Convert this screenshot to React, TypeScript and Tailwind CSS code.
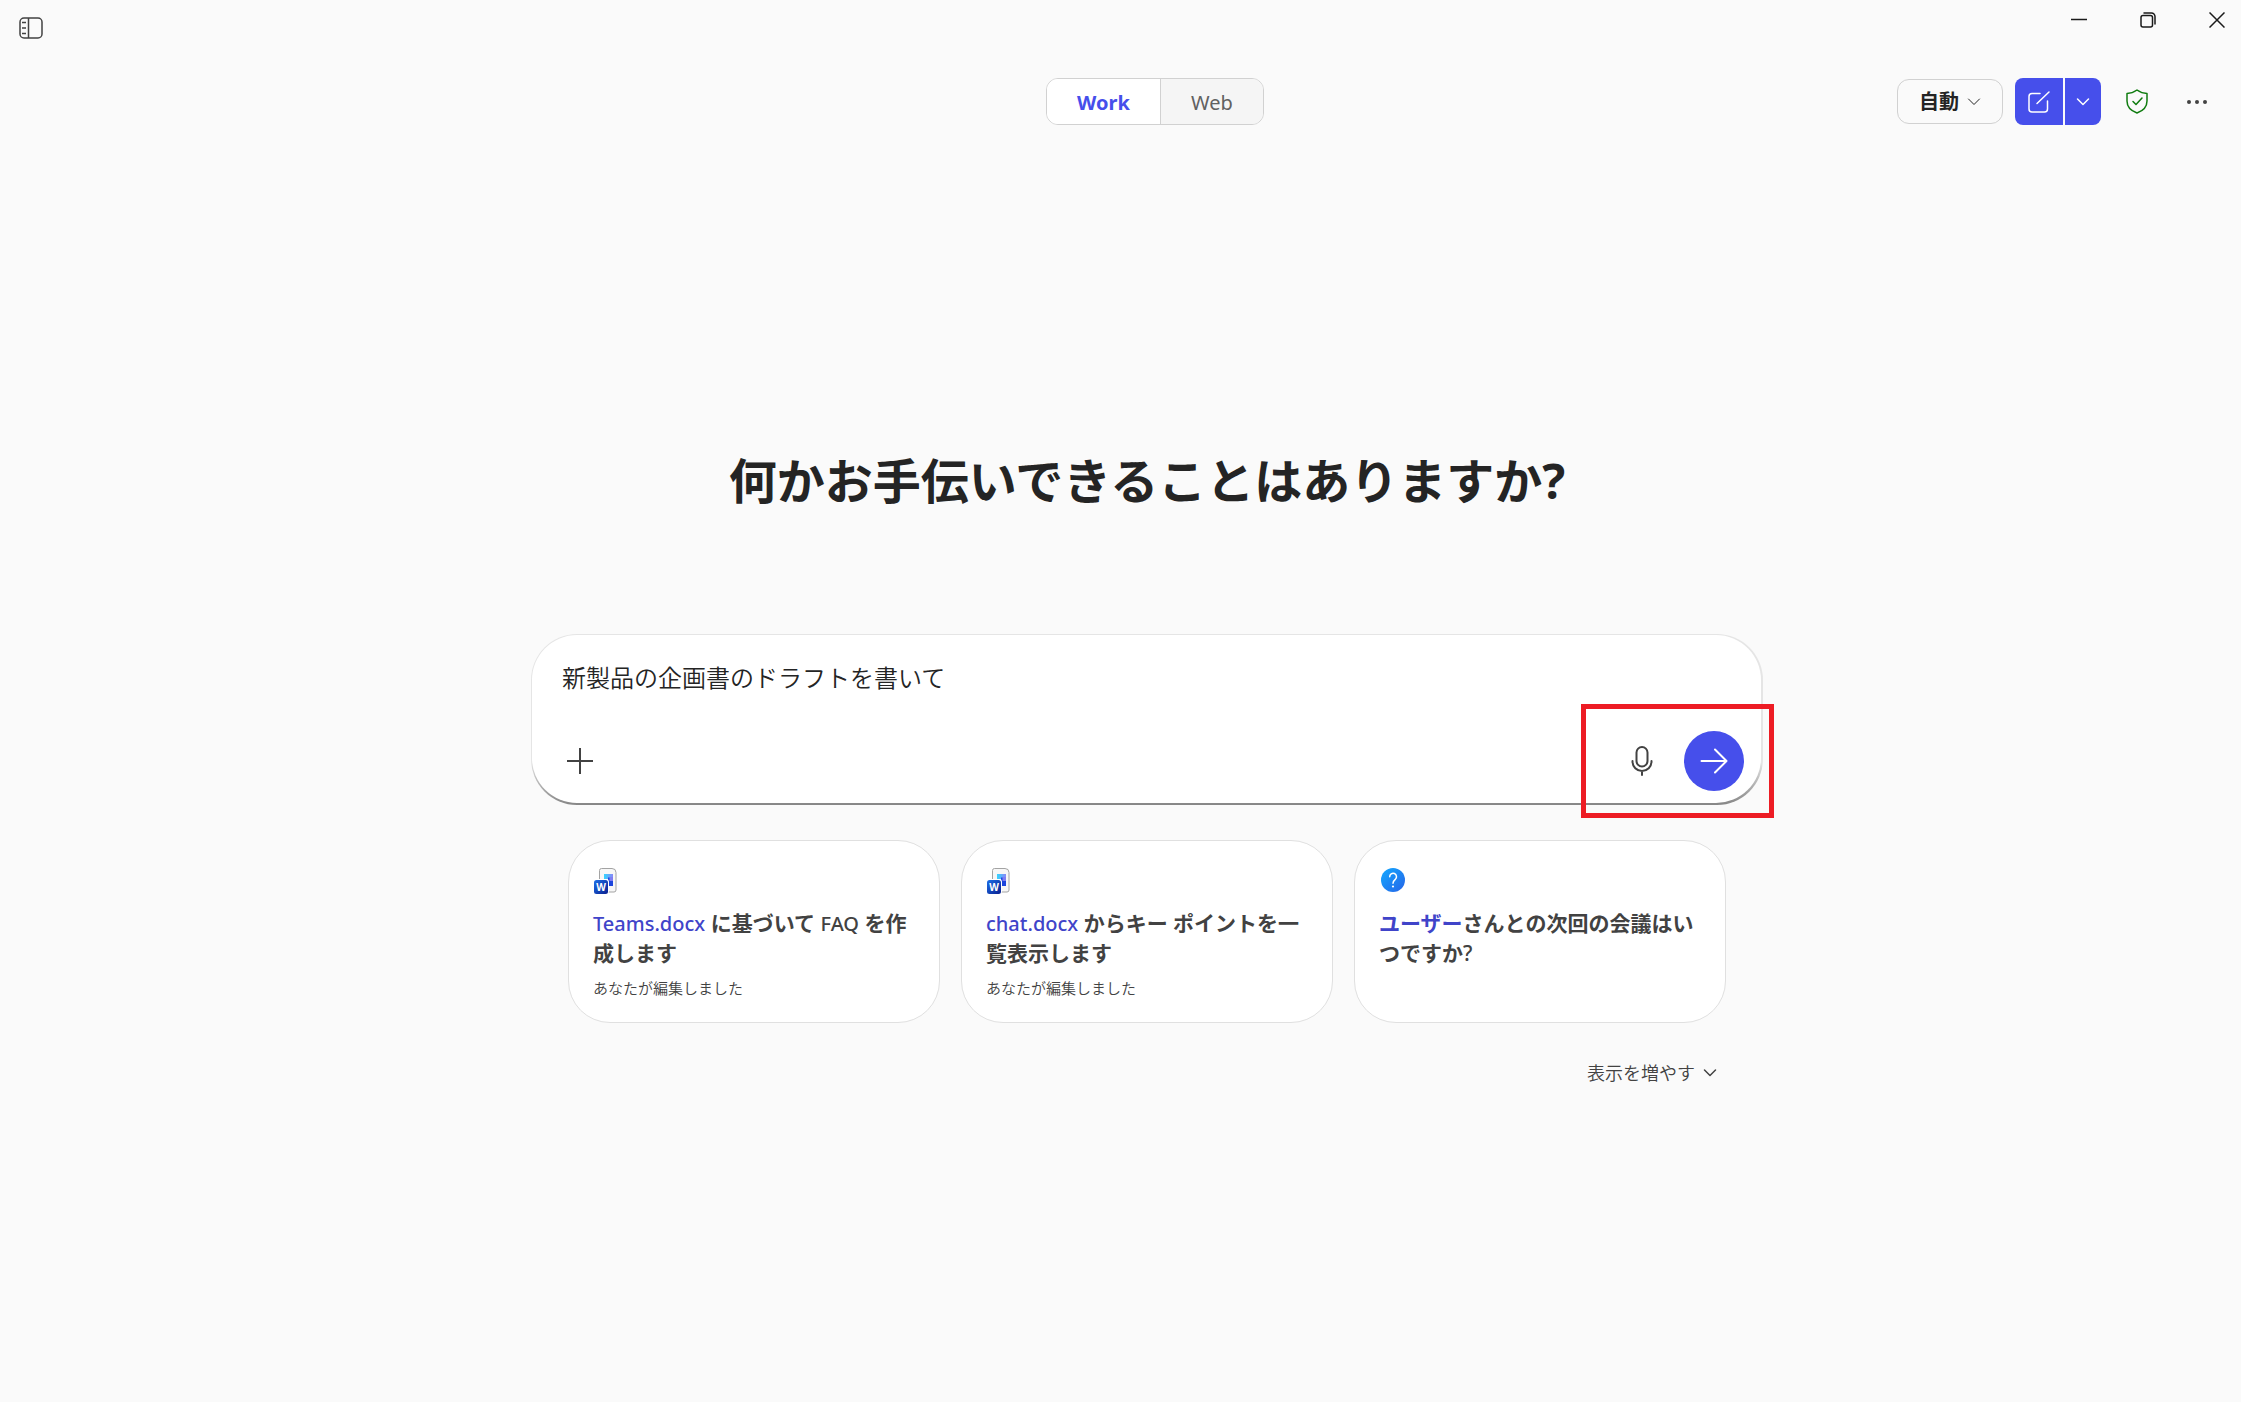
import { useState } from 'react'
import type { ReactNode } from 'react'

type Suggestion = {
  id: number
  icon: 'word' | 'question'
  title: ReactNode
  note?: string
}

const suggestions: Suggestion[] = [
  {
    id: 1,
    icon: 'word',
    title: (
      <>
        <span className="text-xl font-medium text-[#4044c9]">Teams.docx</span> に基づいて{' '}
        <span className="text-xl font-medium">FAQ</span> を作成します
      </>
    ),
    note: 'あなたが編集しました',
  },
  {
    id: 2,
    icon: 'word',
    title: (
      <>
        <span className="text-xl font-medium text-[#4044c9]">chat.docx</span> からキー ポイントを一覧表示します
      </>
    ),
    note: 'あなたが編集しました',
  },
  {
    id: 3,
    icon: 'question',
    title: (
      <>
        <span className="text-[#4044c9]">ユーザー</span>さんとの次回の会議はいつですか<span className="font-medium">?</span>
      </>
    ),
  },
]

function SidebarIcon() {
  return (
    <svg width="24" height="22" viewBox="0 0 24 22" fill="none" stroke="#424242" strokeWidth="1.5">
      <rect x="1" y="1" width="22" height="20" rx="4" />
      <path d="M9.500 1v20M3 5.500h4M3 11h4M3 16.500h4" />
    </svg>
  )
}

function ChevronDown({ className }: { className?: string }) {
  return (
    <svg
      className={className}
      width="14"
      height="10"
      viewBox="0 0 14 10"
      fill="none"
      stroke="currentColor"
      strokeLinecap="round"
      strokeLinejoin="round"
    >
      <path d="M1.500 2 7 7.500 12.500 2" />
    </svg>
  )
}

function ComposeIcon() {
  return (
    <svg width="24" height="24" viewBox="0 0 24 24" fill="none" stroke="white" strokeWidth="1.5" strokeLinecap="round">
      <path d="M13 3.500H5A3 3 0 0 0 2 6.500v12.500A3 3 0 0 0 5 22h12.500a3 3 0 0 0 3-3V11" />
      <path d="M10 13.500 22 2" />
    </svg>
  )
}

function ShieldIcon() {
  return (
    <svg
      width="24"
      height="26"
      viewBox="0 0 24 26"
      fill="none"
      stroke="#107c10"
      strokeWidth="1.5"
      strokeLinecap="round"
      strokeLinejoin="round"
    >
      <path d="M12 1c3 2.200 6.200 3.400 10 3.500V12c0 5.800-3.600 9.700-10 12-6.400-2.300-10-6.200-10-12V4.500c3.800-.1 7-1.300 10-3.500z" />
      <path d="m8 12.500 3 3 6-6.500" />
    </svg>
  )
}

function MicIcon() {
  return (
    <svg width="24" height="32" viewBox="0 0 24 32" fill="none" stroke="#424242" strokeWidth="2" strokeLinecap="round">
      <rect x="6.500" y="2" width="11" height="19.500" rx="5.500" />
      <path d="M2.500 16v.5a9.500 9.500 0 0 0 19 0V16M12 26v4" />
    </svg>
  )
}

function WordIcon() {
  return (
    <svg className="ml-px" width="24" height="26" viewBox="0 0 24 26">
      <defs>
        <linearGradient id="word-tile" x1="0" y1="0" x2="1" y2="1">
          <stop offset="0" stopColor="#1d6fe8" />
          <stop offset="1" stopColor="#0a1f8f" />
        </linearGradient>
        <linearGradient id="word-page" x1="0" y1="0" x2="1" y2="0">
          <stop offset="0" stopColor="#33d6ff" />
          <stop offset="1" stopColor="#8a86f7" />
        </linearGradient>
      </defs>
      <path
        d="M7.500.5h10.500a4 4 0 0 1 4 4V22a2 2 0 0 1-2 2H7.500a2 2 0 0 1-2-2V2.500a2 2 0 0 1 2-2z"
        fill="#f7f7f7"
        stroke="#a3a3a3"
      />
      <path d="M10 6h9v5h-9z" fill="url(#word-page)" />
      <path d="M14 9.500h5V18h-5z" fill="#1c45dd" />
      <path d="M15.500 9h3.500v4h-3.500z" fill="#7f7df2" />
      <rect x="0" y="11" width="15" height="15" rx="3" fill="white" />
      <rect x="0" y="12" width="14" height="14" rx="2.500" fill="url(#word-tile)" />
      <text
        x="7"
        y="22.500"
        textAnchor="middle"
        className="fill-white font-['Noto_Sans',sans-serif] text-[10px] font-bold"
      >
        W
      </text>
    </svg>
  )
}

function QuestionIcon() {
  return (
    <svg className="ml-0.5" width="24" height="24" viewBox="0 0 24 24">
      <defs>
        <linearGradient id="question-fill" x1="0" y1="0" x2="1" y2="1">
          <stop offset="0" stopColor="#12a9ff" />
          <stop offset="1" stopColor="#2764e7" />
        </linearGradient>
      </defs>
      <circle cx="12" cy="12" r="12" fill="url(#question-fill)" />
      <path
        d="M8.700 8.800a3.400 3.400 0 1 1 5.700 2.400c-1.500 1.300-2.400 2-2.400 4"
        fill="none"
        stroke="white"
        strokeWidth="1.500"
        strokeLinecap="round"
      />
      <circle cx="12" cy="18.500" r="1.100" fill="white" />
    </svg>
  )
}

function IconButton({ label, children, className = '' }: { label: string; children: ReactNode; className?: string }) {
  return (
    <button type="button" aria-label={label} className={`flex items-center justify-center ${className}`}>
      {children}
    </button>
  )
}

function SuggestionCard({ item }: { item: Suggestion }) {
  return (
    <button
      type="button"
      className="flex flex-col items-start rounded-[42px] border border-[#e0e0e0] bg-white px-6 pt-[27px] pb-[22px] text-left text-[#424242]"
    >
      <span className="flex h-[26px] items-start">
        {item.icon === 'word' ? <WordIcon /> : <QuestionIcon />}
      </span>
      <span className="mt-3.5 text-[21px] leading-[30px] font-bold">{item.title}</span>
      {item.note && <span className="mt-2 text-[15px] leading-6 font-[350]">{item.note}</span>}
    </button>
  )
}

export default function App() {
  const [mode, setMode] = useState<'work' | 'web'>('work')
  const [prompt, setPrompt] = useState('新製品の企画書のドラフトを書いて')

  const tabClass = (active: boolean) =>
    active ? 'bg-white font-bold text-[#464feb]' : 'bg-[#f5f5f5] text-[#616161]'

  return (
    <div className="min-h-screen bg-[#fafafa] font-['Noto_Sans','Noto_Sans_CJK_JP',sans-serif] text-[#242424]">
      <div className="flex h-14 items-start justify-between">
        <IconButton label="サイドバー" className="h-14 pl-[19px]">
          <SidebarIcon />
        </IconButton>
        <div className="flex h-10 text-[#1b1b1b]">
          <IconButton label="最小化" className="w-[69px]">
            <svg width="16" height="16" viewBox="0 0 16 16" stroke="currentColor" strokeWidth="1.500">
              <path d="M0 7.500h16" />
            </svg>
          </IconButton>
          <IconButton label="元に戻す" className="w-[69px]">
            <svg width="16" height="16" viewBox="0 0 16 16" fill="none" stroke="currentColor" strokeWidth="1.500">
              <rect x="1" y="3.500" width="11.500" height="11.500" rx="2" />
              <path d="M4 1h7.500A3.500 3.500 0 0 1 15 4.500V12" strokeLinecap="round" />
            </svg>
          </IconButton>
          <IconButton label="閉じる" className="w-[59px] pl-[11px]">
            <svg width="16" height="16" viewBox="0 0 16 16" stroke="currentColor" strokeWidth="1.500">
              <path d="m.5.5 15 15M15.500.5l-15 15" />
            </svg>
          </IconButton>
        </div>
      </div>

      <header className="grid grid-cols-[1fr_auto_1fr] items-center pt-[22px] pr-8 pl-[101px]">
        <div />
        <div className="flex h-[47px] overflow-hidden rounded-xl border border-[#d1d1d1] text-xl">
          <button
            type="button"
            aria-pressed={mode === 'work'}
            onClick={() => setMode('work')}
            className={`w-[114px] border-r border-[#d1d1d1] pt-0.5 ${tabClass(mode === 'work')}`}
          >
            Work
          </button>
          <button
            type="button"
            aria-pressed={mode === 'web'}
            onClick={() => setMode('web')}
            className={`w-[102px] pt-0.5 ${tabClass(mode === 'web')}`}
          >
            Web
          </button>
        </div>
        <div className="flex items-center justify-end">
          <button
            type="button"
            className="flex h-[45px] w-[106px] items-center justify-center gap-2 rounded-xl border border-[#d1d1d1] text-xl font-bold"
          >
            自動
            <ChevronDown />
          </button>
          <div className="ml-3 flex h-[47px] gap-0.5">
            <IconButton label="新しいチャット" className="w-12 rounded-l-lg bg-[#464feb]">
              <ComposeIcon />
            </IconButton>
            <IconButton label="その他の作成オプション" className="w-9 rounded-r-lg bg-[#464feb] text-white">
              <ChevronDown className="stroke-[1.5]" />
            </IconButton>
          </div>
          <IconButton label="保護" className="ml-6 h-11 w-6">
            <ShieldIcon />
          </IconButton>
          <IconButton label="その他" className="ml-9 h-11 w-6">
            <svg width="20" height="4" viewBox="0 0 20 4" fill="#424242">
              <circle cx="2" cy="2" r="2" />
              <circle cx="10" cy="2" r="2" />
              <circle cx="18" cy="2" r="2" />
            </svg>
          </IconButton>
        </div>
      </header>

      <main className="pt-[324px] pl-[53px]">
        <div className="mx-auto max-w-[1232px]">
          <h1 className="text-center text-5xl leading-[64px] font-bold">何かお手伝いできることはありますか?</h1>

          <form
            onSubmit={(e) => e.preventDefault()}
            className="relative mt-[121px] rounded-[46px] bg-linear-to-b from-[#e5e5e5] from-75% to-[#868686] pt-px pr-0.5 pb-0.5 pl-px"
          >
            <div className="rounded-[45px] bg-white pt-[23px] pr-[17px] pb-3 pl-[30px]">
              <input
                type="text"
                aria-label="メッセージ"
                value={prompt}
                onChange={(e) => setPrompt(e.target.value)}
                className="block h-9 w-full text-2xl font-[350] outline-none"
              />
              <div className="mt-[37px] flex items-center justify-between">
                <IconButton label="追加" className="size-9">
                  <svg width="28" height="28" viewBox="0 0 28 28" stroke="#424242" strokeWidth="2">
                    <path d="M14 1v26M1 14h26" />
                  </svg>
                </IconButton>
                <div className="flex items-center gap-[30px]">
                  <IconButton label="音声入力">
                    <MicIcon />
                  </IconButton>
                  <button
                    type="submit"
                    aria-label="送信"
                    className="flex size-[60px] items-center justify-center rounded-full bg-[#464feb]"
                  >
                    <svg
                      width="28"
                      height="26"
                      viewBox="0 0 28 26"
                      fill="none"
                      stroke="white"
                      strokeWidth="2"
                      strokeLinecap="round"
                      strokeLinejoin="round"
                    >
                      <path d="M1.500 13H26M15 1.500 26.500 13 15 24.500" />
                    </svg>
                  </button>
                </div>
              </div>
            </div>
            {/* highlight frame around mic and send */}
            <div className="pointer-events-none absolute -right-[11px] -bottom-[13px] h-[114px] w-[193px] border-5 border-[#ed1c24]" />
          </form>

          <div className="mt-[35px] grid grid-cols-3 gap-[21px] px-[37px]">
            {suggestions.map((s) => (
              <SuggestionCard key={s.id} item={s} />
            ))}
          </div>

          <div className="mt-8 flex justify-end pr-[46px]">
            <button type="button" className="flex h-9 items-center gap-2 text-lg font-[350] text-[#424242]">
              表示を増やす
              <ChevronDown className="stroke-[1.5]" />
            </button>
          </div>
        </div>
      </main>
    </div>
  )
}
